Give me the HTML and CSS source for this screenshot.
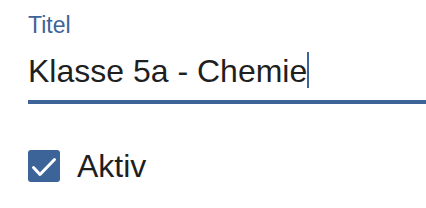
FILE: index.html
```html
<!DOCTYPE html>
<html lang="de">
<head>
    <meta charset="UTF-8">
    <meta name="viewport" content="width=device-width, initial-scale=1.0">
    <title>Klasse bearbeiten</title>
    <link rel="stylesheet" href="styles.css">
</head>
<body>
    <div class="form">
        <label class="field-label">Titel</label>
        <div class="field">
            <span class="field-value">Klasse 5a - Chemie</span><span class="caret"></span>
        </div>
        <div class="check-row">
            <span class="checkbox">
                <svg width="32" height="32" viewBox="0 0 32 32">
                    <path d="M5.5 17.5 L12 24.5 L26.5 9.5" fill="none" stroke="#fff" stroke-width="3" stroke-linecap="round" stroke-linejoin="round"/>
                </svg>
            </span>
            <span class="check-label">Aktiv</span>
        </div>
    </div>
</body>
</html>
```

FILE: styles.css
```css
body {
    margin: 0;
    background: #fff;
    font-family: "Liberation Sans", Arial, sans-serif;
    color: #1f1f1f;
}
.form {
    padding: 12px 0 0 28px;
}
.field-label {
    display: block;
    font-size: 23px;
    line-height: 26px;
    color: #3d6498;
}
.field {
    margin-top: 15px;
    font-size: 32px;
    line-height: 36px;
    height: 36px;
    padding-bottom: 11px;
    border-bottom: 4px solid #3d6498;
    white-space: nowrap;
}
.caret {
    display: inline-block;
    width: 2px;
    height: 36px;
    vertical-align: top;
    margin-top: -1px;
    background: #3d6498;
}
.check-row {
    display: flex;
    align-items: center;
    gap: 17px;
    margin-top: 44px;
}
.checkbox {
    display: block;
    width: 32px;
    height: 32px;
    border-radius: 3px;
    background: #3d6498;
}
.checkbox svg {
    display: block;
}
.check-label {
    font-size: 32px;
    line-height: 36px;
}
```
